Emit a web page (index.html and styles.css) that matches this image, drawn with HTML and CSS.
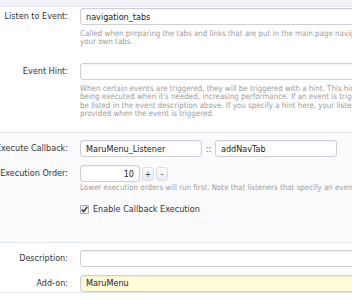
FILE: index.html
```html
<!DOCTYPE html>
<html lang="en">

<head>
    <meta charset="UTF-8">
    <meta name="viewport" content="width=device-width, initial-scale=1.0">
    <title>Edit Code Event Listener</title>
    <link rel="stylesheet" href="styles.css">
</head>

<body>
    <div class="topbar"></div>
    <form class="form">
        <div class="section">
            <div class="row first-row">
                <label class="label">Listen to Event:</label>
                <div class="field">
                    <input type="text" class="textbox wide" value="navigation_tabs">
                    <p class="explain">Called when preparing the tabs and links that are put in the main page naviga<br>your own tabs.</p>
                </div>
            </div>
            <div class="row hint-row">
                <label class="label">Event Hint:</label>
                <div class="field">
                    <input type="text" class="textbox wide" value="">
                    <p class="explain">When certain events are triggered, they will be triggered with a hint. This hint<br>being executed when it's needed, increasing performance. If an event is trigg<br>be listed in the event description above. If you specify a hint here, your listen<br>provided when the event is triggered.</p>
                </div>
            </div>
        </div>

        <div class="section shaded">
            <div class="row callback-row">
                <label class="label">Execute Callback:</label>
                <div class="field inline">
                    <input type="text" class="textbox half" value="MaruMenu_Listener">
                    <span class="sep">::</span>
                    <input type="text" class="textbox half" value="addNavTab">
                </div>
            </div>
            <div class="row order-row">
                <label class="label">Execution Order:</label>
                <div class="field">
                    <div class="inline">
                        <input type="text" class="textbox number" value="10">
                        <button type="button" class="spin">+</button>
                        <button type="button" class="spin">-</button>
                    </div>
                    <p class="explain tight">Lower execution orders will run first. Note that listeners that specify an event</p>
                    <label class="check">
                        <span class="box">
                            <svg width="7" height="7" viewBox="0 0 7 7">
                                <path d="M0.8 3.6 L2.7 5.6 L6.2 0.9" fill="none" stroke="#333" stroke-width="1.5"/>
                            </svg>
                        </span>
                        Enable Callback Execution
                    </label>
                </div>
            </div>
        </div>

        <div class="section">
            <div class="row desc-row">
                <label class="label">Description:</label>
                <div class="field">
                    <input type="text" class="textbox wide" value="">
                </div>
            </div>
            <div class="row addon-row">
                <label class="label">Add-on:</label>
                <div class="field">
                    <input type="text" class="textbox wide addon" value="MaruMenu">
                </div>
            </div>
        </div>
    </form>
</body>

</html>
```

FILE: styles.css
```css
body {
    margin: 0;
    overflow: hidden;
    background: #fff;
    font-family: 'DejaVu Sans Condensed', 'DejaVu Sans', sans-serif;
    font-size: 9px;
    color: #333;
}

.topbar {
    height: 6px;
    background: #f0f2f8;
    border-bottom: 1px solid #e3e6ef;
}

.form {
    width: 420px;
}

.section {
    border-bottom: 1px solid #dfe5ef;
}

.shaded {
    background: #fbfbfd;
}

.row {
    display: flex;
    align-items: flex-start;
}

.label {
    width: 68px;
    flex: none;
    display: flex;
    justify-content: flex-end;
    margin-right: 12px;
    white-space: nowrap;
    line-height: 17px;
}

.field {
    flex: 1;
}

.inline {
    display: flex;
    align-items: center;
}

.textbox {
    box-sizing: border-box;
    height: 17px;
    margin: 0;
    padding: 0 5px;
    border: 1px solid #cdced6;
    border-radius: 3px;
    background: #fff;
    box-shadow: inset 0 1px 2px rgba(0, 0, 0, 0.06);
    font-family: inherit;
    font-size: 9px;
    color: #222;
}

.wide {
    width: 340px;
}

.half {
    width: 122px;
}

.number {
    width: 60px;
    text-align: right;
}

.addon {
    background: #fffcd9;
}

.sep {
    width: 13px;
    text-align: center;
    color: #555;
}

.spin {
    width: 12px;
    height: 14px;
    margin-left: 2px;
    padding: 0;
    border: 1px solid #dcdde3;
    border-radius: 3px;
    background: linear-gradient(#fdfdfe, #e9eaef);
    font-family: inherit;
    font-size: 9px;
    color: #444;
}

.explain {
    margin: 5px 0 0;
    font-size: 7.9px;
    line-height: 8.4px;
    color: #9d9d9d;
    white-space: nowrap;
}

.explain.tight {
    margin-top: 2px;
}

.first-row {
    padding-top: 1px;
}

.hint-row {
    padding-top: 16px;
    padding-bottom: 14px;
}

.callback-row {
    padding-top: 7px;
}

.order-row {
    padding-top: 8px;
    padding-bottom: 27px;
}

.check {
    display: flex;
    align-items: center;
    gap: 4px;
    margin-top: 11px;
    line-height: 11px;
    color: #333;
}

.box {
    box-sizing: border-box;
    width: 9px;
    height: 9px;
    display: flex;
    align-items: center;
    justify-content: center;
    border: 1px solid #a9abb3;
    border-radius: 1px;
    background: linear-gradient(#e6e7ea, #fafafb);
}

.desc-row {
    padding-top: 7px;
}

.addon-row {
    padding-top: 8px;
}
```
